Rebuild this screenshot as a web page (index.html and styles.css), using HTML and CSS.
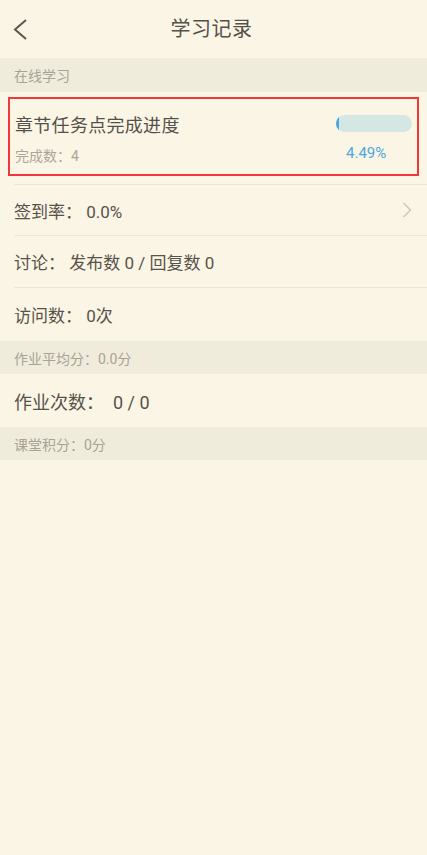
FILE: index.html
```html
<!doctype html>
<html lang="zh-CN">
    <head>
        <meta charset="utf-8" />
        <title>学习记录</title>
        <link rel="stylesheet" href="styles.css">
    </head>
 <body>
    <div class="page">
        <div class="header">
            <svg class="back" width="16" height="24" viewBox="0 0 16 24">
                <polyline points="13,2 2,11.5 13,21" fill="none" stroke="#5a5650" stroke-width="2" />
            </svg>
            <div class="title">学习记录</div>
        </div>

        <div class="section">在线学习</div>

        <div class="task-row">
            <div class="task-box">
                <div class="task-left">
                    <div class="task-name">章节任务点完成进度</div>
                    <div class="task-sub">完成数：4</div>
                </div>
                <div class="task-right">
                    <div class="bar"><div class="bar-fill" style="width:4.49%"></div></div>
                    <div class="percent">4.49%</div>
                </div>
            </div>
        </div>

        <ul class="list">
            <li class="item">
                <span>签到率：&nbsp;0.0%</span>
                <svg class="arrow" width="10" height="16" viewBox="0 0 10 16">
                    <polyline points="1.5,1 8.5,8 1.5,15" fill="none" stroke="#cbc7bc" stroke-width="1.5" />
                </svg>
            </li>
            <li class="item">讨论：&nbsp;发布数 0 / 回复数 0</li>
            <li class="item">访问数：&nbsp;0次</li>
        </ul>

        <div class="section small">作业平均分：0.0分</div>

        <ul class="list plain">
            <li class="item strong">作业次数：&nbsp;&nbsp;0 / 0</li>
        </ul>

        <div class="section small">课堂积分：0分</div>
    </div>
 </body>
</html>
```

FILE: styles.css
```css
*{
    margin:0;
    padding:0;
    box-sizing:border-box;
}
ul,li{
    list-style:none;
}
html,body{
    background:#fbf5e6;
}
body{
    font-family:Roboto,"Noto Sans CJK SC","Noto Sans",sans-serif;
    color:#57524a;
}
.page{
    width:427px;
    min-height:855px;
    background:#fbf5e6;
}
.header{
    position:relative;
    height:58px;
    display:flex;
    align-items:center;
    justify-content:center;
}
.header .back{
    position:absolute;
    left:13px;
    top:18px;
}
.header .title{
    font-size:20px;
    line-height:26px;
    color:#55514a;
    margin-left:-4px;
    letter-spacing:0.5px;
}
.section{
    height:34px;
    display:flex;
    align-items:center;
    padding-left:14px;
    background:#f0ecdc;
    font-size:14px;
    color:#a8a396;
}
.section.small{
    height:33px;
}
.task-row{
    height:92px;
    padding:5px 8px 0 8px;
}
.task-box{
    height:79px;
    border:2px solid #f0373c;
    display:flex;
    justify-content:space-between;
    padding:0 5px 0 5px;
}
.task-left{
    padding-top:15px;
}
.task-name{
    font-size:18px;
    line-height:24px;
    color:#55514a;
    letter-spacing:0.3px;
}
.task-sub{
    margin-top:8px;
    font-size:14px;
    line-height:20px;
    color:#aba699;
}
.task-right{
    width:76px;
    padding-top:16px;
}
.bar{
    height:17px;
    border-radius:9px;
    background:#d5e7e3;
    overflow:hidden;
}
.bar-fill{
    height:100%;
    background:#4aa8e2;
    border-radius:9px 0 0 9px;
}
.percent{
    margin-top:11px;
    margin-left:10px;
    font-size:15px;
    line-height:20px;
    color:#4aa8e2;
}
.list{
    border-top:1px solid #ede6d5;
    margin-left:14px;
}
.list.plain{
    border-top:none;
}
.item{
    height:52px;
    display:flex;
    align-items:center;
    justify-content:space-between;
    padding-right:15px;
    font-size:17px;
    color:#57524a;
    border-bottom:1px solid #ede6d5;
}
.item:first-child{
    height:51px;
}
.list .item:last-child{
    height:53px;
    border-bottom:none;
}
.item.strong{
    height:52px;
    font-size:18px;
}
```
